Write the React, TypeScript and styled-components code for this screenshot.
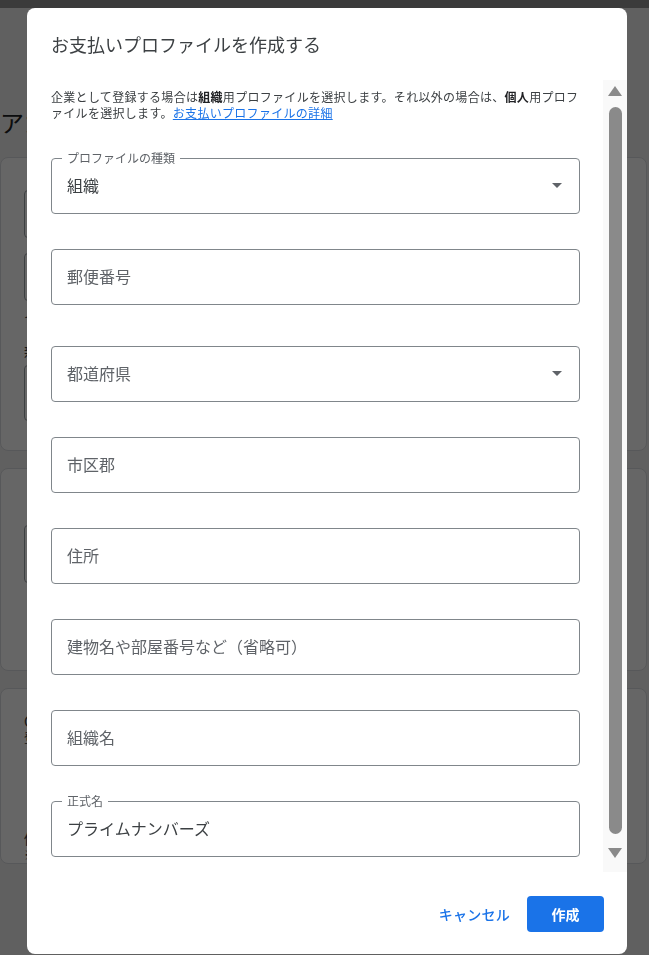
import styled, { createGlobalStyle } from "styled-components";

const GlobalStyle = createGlobalStyle`
  html, body {
    margin: 0;
    padding: 0;
  }
  body {
    font-family: "Noto Sans CJK JP", "Noto Sans", sans-serif;
    background: #f0f0f0;
    overflow: hidden;
  }
  * {
    box-sizing: border-box;
  }
`;

// ---- page behind the dialog ----

const Page = styled.div`
  height: 955px;
  overflow: hidden;
  background: #f0f0f0;
`;

const TopStrip = styled.div`
  height: 8px;
  background: #939393;
`;

const PageBody = styled.main`
  padding: 0 2px 0 0;
  display: flex;
  flex-direction: column;
`;

const PageTitle = styled.h1`
  margin: 98px 0 19px;
  font-size: 24px;
  line-height: 32px;
  font-weight: 400;
  color: #202124;
`;

const BgCard = styled.section<{ $height?: number; $top: number }>`
  height: ${(p) => (p.$height ? `${p.$height}px` : "auto")};
  margin-bottom: 17px;
  padding: ${(p) => p.$top}px 23px 0;
  background: #fff;
  border: 1px solid #dadce0;
  border-radius: 8px;
  display: flex;
  flex-direction: column;
`;

const BgInput = styled.div<{ $h: number; $gap: number }>`
  height: ${(p) => p.$h}px;
  margin-bottom: ${(p) => p.$gap}px;
  border: 1px solid #9aa0a6;
  border-radius: 4px;
`;

const BgText = styled.div<{ $size: number; $gap: number }>`
  font-size: ${(p) => p.$size}px;
  line-height: 16px;
  margin-bottom: ${(p) => p.$gap}px;
  color: #3c4043;
  white-space: nowrap;
`;

// ---- dialog ----

const Overlay = styled.div`
  position: fixed;
  inset: 0;
  background: rgba(0, 0, 0, 0.6);
`;

const Dialog = styled.div`
  position: fixed;
  left: 27px;
  top: 8px;
  width: 600px;
  height: 946px;
  background: #fff;
  border-radius: 8px;
  display: flex;
  flex-direction: column;
  overflow: hidden;
`;

const Header = styled.header`
  padding: 24px 24px;
`;

const Title = styled.h2`
  margin: 0;
  font-size: 18px;
  line-height: 24px;
  font-weight: 400;
  color: #3c4043;
`;

const Body = styled.div`
  display: flex;
  height: 792px;
`;

const Content = styled.div`
  flex: 1;
  padding: 9px 23px 0 24px;
  display: flex;
  flex-direction: column;
`;

const Description = styled.p`
  margin: 0 0 37px;
  font-size: 12px;
  line-height: 16px;
  letter-spacing: 0.3px;
  line-break: loose;
  color: #3c4043;

  b {
    font-weight: 700;
    color: #202124;
  }

  a {
    color: #1a73e8;
    text-decoration: underline;
  }
`;

const Field = styled.div<{ $gap: number }>`
  position: relative;
  height: 56px;
  flex: none;
  margin-bottom: ${(p) => p.$gap}px;
  padding: 0 12px 2px 15px;
  border: 1px solid #80868b;
  border-radius: 4px;
  display: flex;
  align-items: center;
`;

const FloatLabel = styled.span`
  position: absolute;
  top: -9px;
  left: 10px;
  padding: 0 5px;
  background: #fff;
  font-size: 12px;
  line-height: 16px;
  color: #5f6368;
`;

const Value = styled.span<{ $filled?: boolean }>`
  font-size: 16px;
  line-height: 24px;
  color: ${(p) => (p.$filled ? "#3c4043" : "#5f6368")};
`;

const Caret = styled.span`
  margin-left: auto;
  margin-right: 5px;
  width: 0;
  height: 0;
  border-left: 5px solid transparent;
  border-right: 5px solid transparent;
  border-top: 5px solid #5f6368;
`;

const Rail = styled.div`
  width: 24px;
  background: #f9f9f9;
  display: flex;
  flex-direction: column;
  align-items: center;
  padding-top: 6px;
`;

const Arrow = styled.span<{ $down?: boolean }>`
  width: 0;
  height: 0;
  border-left: 7px solid transparent;
  border-right: 7px solid transparent;
  ${(p) =>
    p.$down ? "border-top: 10px solid #8a8a8a;" : "border-bottom: 10px solid #8a8a8a;"}
`;

const Thumb = styled.div`
  width: 13px;
  height: 727px;
  margin: 11px 0 14px;
  border-radius: 7px;
  background: #8a8a8a;
`;

const Footer = styled.footer`
  padding: 24px 23px 0;
  display: flex;
  justify-content: flex-end;
  align-items: center;
  gap: 7px;
`;

const TextButton = styled.button`
  height: 36px;
  padding: 0 10px;
  border: 0;
  background: none;
  font-family: inherit;
  font-size: 14px;
  font-weight: 500;
  letter-spacing: 0.25px;
  color: #1a73e8;
`;

const PrimaryButton = styled.button`
  width: 77px;
  height: 36px;
  border: 0;
  border-radius: 4px;
  background: #1a73e8;
  font-family: inherit;
  font-size: 14px;
  font-weight: 700;
  color: #fff;
`;

const fields = [
  { label: "プロファイルの種類", value: "組織", filled: true, select: true, gap: 35 },
  { value: "郵便番号", gap: 41 },
  { value: "都道府県", select: true, gap: 35 },
  { value: "市区郡", gap: 35 },
  { value: "住所", gap: 35 },
  { value: "建物名や部屋番号など（省略可）", gap: 35 },
  { value: "組織名", gap: 35 },
  { label: "正式名", value: "プライムナンバーズ", filled: true, gap: 0 },
];

export default function App() {
  return (
    <>
      <GlobalStyle />
      <Page>
        <TopStrip />
        <PageBody>
          <PageTitle>アカウント</PageTitle>
          <BgCard $height={294} $top={32}>
            <BgInput $h={48} $gap={15} />
            <BgInput $h={48} $gap={8} />
            <BgText $size={12} $gap={18}>インボイス</BgText>
            <BgText $size={14} $gap={6}>新しい</BgText>
            <BgInput $h={56} $gap={0} />
          </BgCard>
          <BgCard $height={203} $top={56}>
            <BgInput $h={58} $gap={0} />
          </BgCard>
          <BgCard $top={24}>
            <BgText $size={14} $gap={1}>Cloud</BgText>
            <BgText $size={12} $gap={84}>登録済み</BgText>
            <BgText $size={14} $gap={1}>個人</BgText>
            <BgText $size={12} $gap={0}>※</BgText>
          </BgCard>
        </PageBody>
      </Page>
      <Overlay />
      <Dialog>
        <Header>
          <Title>お支払いプロファイルを作成する</Title>
        </Header>
        <Body>
          <Content>
            <Description>
              企業として登録する場合は<b>組織</b>用プロファイルを選択します。それ以外の場合は、<b>個人</b>用プロファイルを選択します。<a href="#">お支払いプロファイルの詳細</a>
            </Description>
            {fields.map((f) => (
              <Field key={f.value} $gap={f.gap}>
                {f.label && <FloatLabel>{f.label}</FloatLabel>}
                <Value $filled={f.filled}>{f.value}</Value>
                {f.select && <Caret />}
              </Field>
            ))}
          </Content>
          <Rail>
            <Arrow />
            <Thumb />
            <Arrow $down />
          </Rail>
        </Body>
        <Footer>
          <TextButton>キャンセル</TextButton>
          <PrimaryButton>作成</PrimaryButton>
        </Footer>
      </Dialog>
    </>
  );
}
